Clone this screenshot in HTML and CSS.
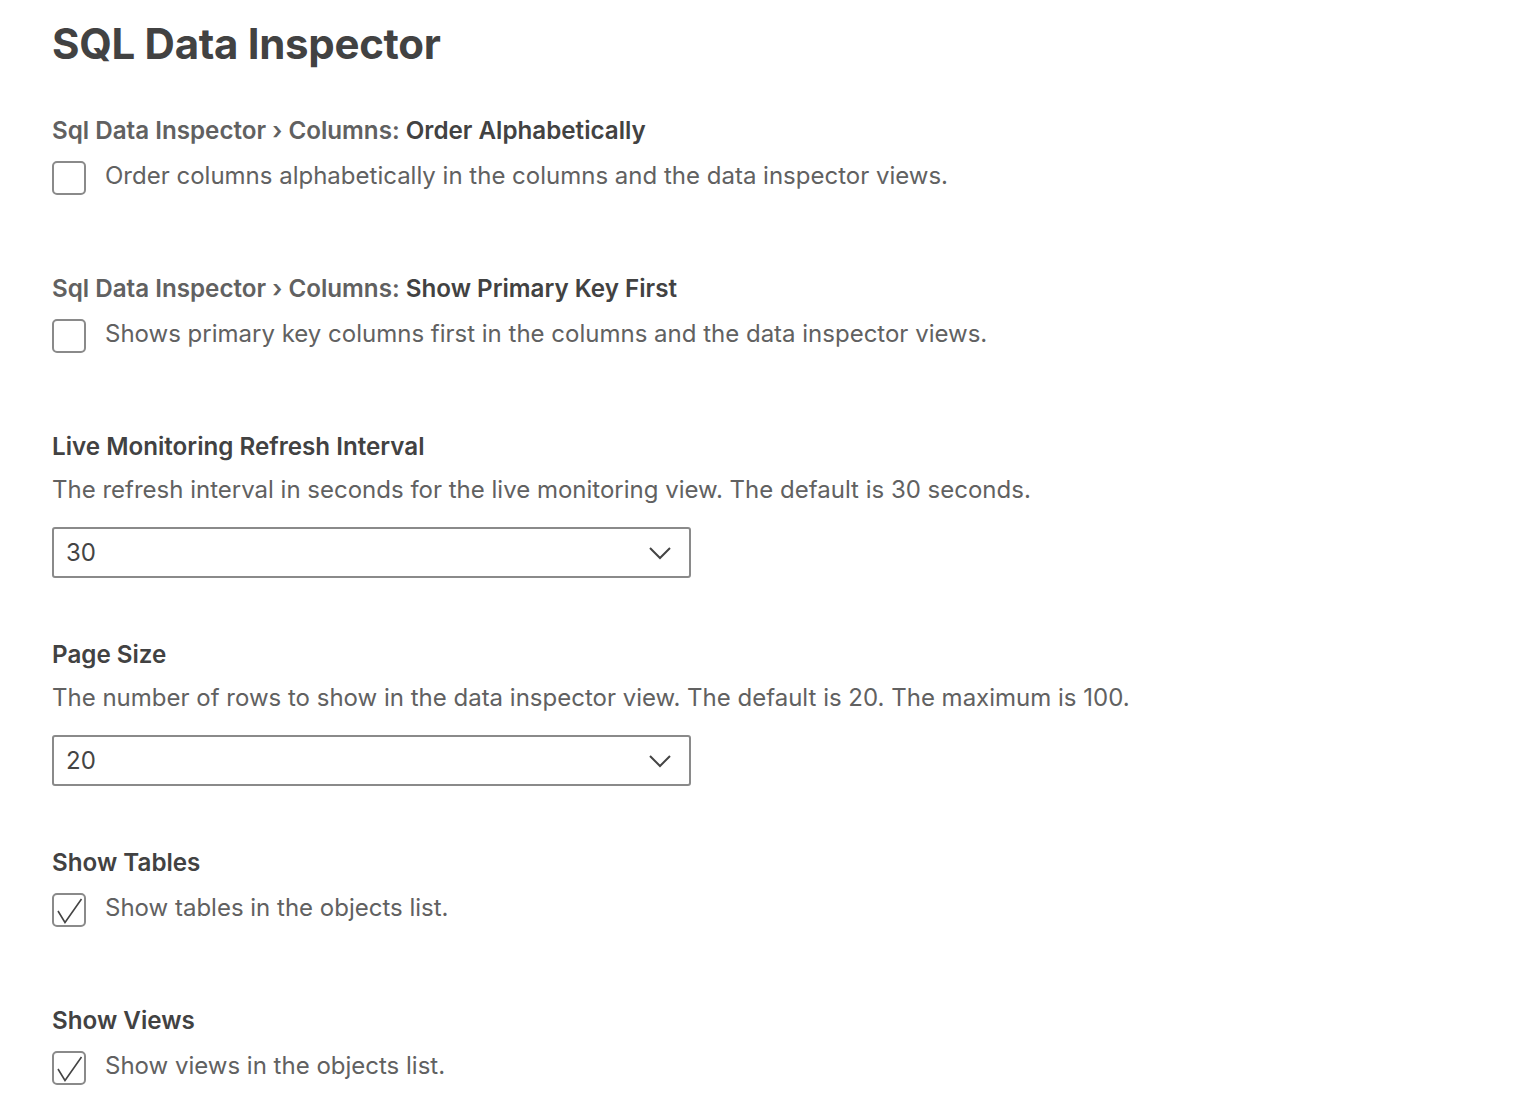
FILE: index.html
```html
<!DOCTYPE html>
<html lang="en">
<head>
<meta charset="utf-8">
<title>SQL Data Inspector</title>
<link rel="stylesheet" href="styles.css">
</head>
<body>
<main class="page">
  <h1 class="title">SQL Data Inspector</h1>

  <section class="setting">
    <div class="label"><span class="cat">Sql Data Inspector › Columns: </span><span class="name">Order Alphabetically</span></div>
    <label class="check-row">
      <span class="checkbox"></span>
      <span class="desc">Order columns alphabetically in the columns and the data inspector views.</span>
    </label>
  </section>

  <section class="setting">
    <div class="label"><span class="cat">Sql Data Inspector › Columns: </span><span class="name">Show Primary Key First</span></div>
    <label class="check-row">
      <span class="checkbox"></span>
      <span class="desc">Shows primary key columns first in the columns and the data inspector views.</span>
    </label>
  </section>

  <section class="setting setting-select">
    <div class="label"><span class="name">Live Monitoring Refresh Interval</span></div>
    <div class="desc desc-block">The refresh interval in seconds for the live monitoring view. The default is 30 seconds.</div>
    <div class="select">
      <span class="value">30</span>
      <svg class="chev" width="24" height="14" viewBox="0 0 24 14"><path d="M2 2 L12 12 L22 2" fill="none" stroke="#444" stroke-width="2"/></svg>
    </div>
  </section>

  <section class="setting setting-select">
    <div class="label"><span class="name">Page Size</span></div>
    <div class="desc desc-block">The number of rows to show in the data inspector view. The default is 20. The maximum is 100.</div>
    <div class="select">
      <span class="value">20</span>
      <svg class="chev" width="24" height="14" viewBox="0 0 24 14"><path d="M2 2 L12 12 L22 2" fill="none" stroke="#444" stroke-width="2"/></svg>
    </div>
  </section>

  <section class="setting">
    <div class="label"><span class="name">Show Tables</span></div>
    <label class="check-row">
      <span class="checkbox"><svg width="34" height="34" viewBox="0 0 34 34"><path d="M6 18 L13 29.5 L29.5 6" fill="none" stroke="#444" stroke-width="1.6"/></svg></span>
      <span class="desc">Show tables in the objects list.</span>
    </label>
  </section>

  <section class="setting">
    <div class="label"><span class="name">Show Views</span></div>
    <label class="check-row">
      <span class="checkbox"><svg width="34" height="34" viewBox="0 0 34 34"><path d="M6 18 L13 29.5 L29.5 6" fill="none" stroke="#444" stroke-width="1.6"/></svg></span>
      <span class="desc">Show views in the objects list.</span>
    </label>
  </section>
</main>
</body>
</html>
```

FILE: styles.css
```css
html, body {
  margin: 0;
  padding: 0;
  background: #ffffff;
}

body {
  font-family: Inter, "Noto Sans", "Liberation Sans", sans-serif;
  color: #444444;
}

.page {
  padding: 20px 52px 0 52px;
}

.title {
  margin: 0;
  font-size: 42px;
  line-height: 48px;
  font-weight: 700;
  color: #424242;
  letter-spacing: -0.3px;
}

.setting {
  padding-bottom: 79px;
}

.page .setting:first-of-type {
  margin-top: 48px;
}

.setting-select {
  padding-bottom: 62px;
}

.label {
  font-size: 24.2px;
  line-height: 30px;
  font-weight: 600;
  white-space: nowrap;
}

.cat {
  color: #616161;
}

.name {
  color: #424242;
}

.check-row {
  display: flex;
  align-items: flex-start;
  gap: 19px;
  margin-top: 10px;
}

.checkbox {
  box-sizing: border-box;
  width: 34px;
  height: 34px;
  margin-top: 5px;
  flex: none;
  border: 2px solid #8a8a8a;
  border-radius: 5px;
  position: relative;
  background: #fff;
}

.checkbox svg {
  position: absolute;
  left: -2px;
  top: -2px;
}

.desc {
  font-size: 24px;
  line-height: 30px;
  color: #616161;
  white-space: nowrap;
}

.check-row .desc {
  margin-top: 5px;
}

.desc-block {
  margin-top: 13px;
}

.select {
  box-sizing: border-box;
  width: 639px;
  height: 51px;
  margin-top: 22px;
  border: 2px solid #8a8a8a;
  border-radius: 3px;
  display: flex;
  align-items: center;
  justify-content: space-between;
  padding: 0 17px 0 12px;
}

.value {
  font-size: 24px;
  color: #444444;
}

.chev {
  display: block;
}
```
